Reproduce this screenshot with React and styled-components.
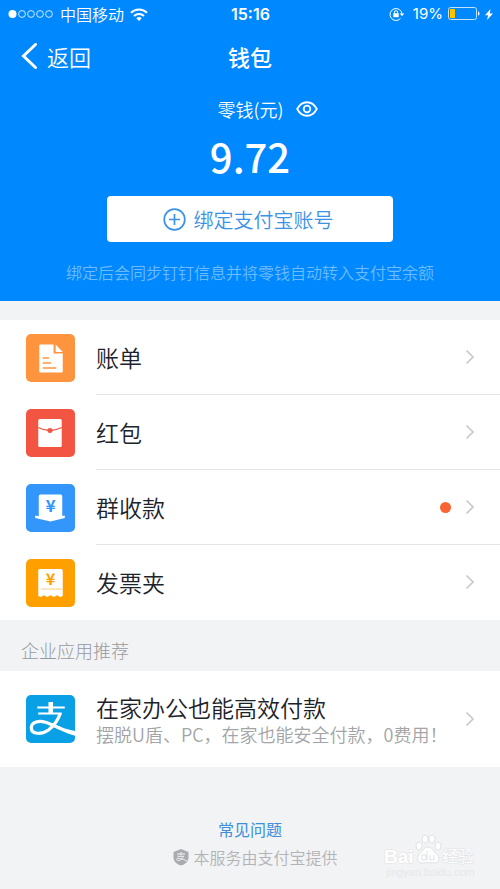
import React from "react";
import styled, { createGlobalStyle } from "styled-components";

const GlobalStyle = createGlobalStyle`
  * {
    box-sizing: border-box;
  }
  body {
    margin: 0;
    background: #f2f3f5;
    font-family: "Noto Sans CJK SC", sans-serif;
    font-weight: 350;
  }
  button {
    border: none;
    background: none;
    padding: 0;
    font: inherit;
    color: inherit;
    cursor: pointer;
  }
  a {
    color: inherit;
    text-decoration: none;
  }
  svg {
    display: block;
    flex: none;
  }
`;

const Page = styled.div`
  position: relative;
  min-height: 100vh;
  background: #f2f3f5;
`;

const Header = styled.header`
  background: #0089ff;
  color: #fff;
  padding-bottom: 17px;
`;

const StatusBar = styled.div`
  display: grid;
  grid-template-columns: 1fr auto 1fr;
  align-items: center;
  height: 28px;
  padding: 0 7px 0 8px;
  font-size: 16px;
  line-height: 24px;
`;

const StatusSide = styled.div`
  display: flex;
  align-items: center;
  justify-content: ${props => (props.$end ? "flex-end" : "flex-start")};
  gap: ${props => (props.$end ? "5px" : "6px")};
  white-space: nowrap;
`;

const Clock = styled.span`
  font-family: Inter, sans-serif;
  font-weight: 600;
`;

const Percent = styled.span`
  font-family: Inter, sans-serif;
  font-size: 15px;
  font-weight: 400;
  margin-left: 3px;
`;

const NavBar = styled.nav`
  display: grid;
  grid-template-columns: 1fr auto 1fr;
  align-items: center;
  height: 56px;
  padding: 0 20px;
  font-size: 22px;
  line-height: 32px;
`;

const BackButton = styled.button`
  display: flex;
  align-items: center;
  justify-self: start;
  gap: 9px;
`;

const Title = styled.h1`
  margin: 0;
  font-size: 22px;
  font-weight: 500;
`;

const Balance = styled.section`
  display: flex;
  flex-direction: column;
  align-items: center;
  padding-top: 12px;
`;

const BalanceLabel = styled.div`
  display: flex;
  align-items: center;
  gap: 13px;
  padding-left: 36px;
  font-size: 18px;
  line-height: 26px;
`;

const Amount = styled.strong`
  font-size: 40px;
  font-weight: 500;
  line-height: 60px;
  margin-top: 4px;
`;

const BindButton = styled.button`
  display: flex;
  align-items: center;
  justify-content: center;
  gap: 8px;
  width: calc(100% - 214px);
  height: 46px;
  margin-top: 10px;
  padding-right: 4px;
  border-radius: 4px;
  background: #fff;
  color: #3b93e8;
  font-size: 20px;
`;

const Hint = styled.p`
  margin: 18px 0 0;
  color: #6cbcff;
  font-size: 16px;
  line-height: 24px;
  white-space: nowrap;
`;

const List = styled.ul`
  margin: ${props => (props.$spaced ? "19px 0 0" : "0")};
  padding: 0;
  list-style: none;
  background: #fff;
`;

const Row = styled.a`
  display: flex;
  align-items: stretch;
  padding-left: 26px;
`;

const RowIcon = styled.span`
  display: flex;
  align-items: center;
  width: 70px;
`;

const RowBody = styled.span`
  flex: 1;
  display: flex;
  align-items: center;
  height: ${props => (props.$tall ? "96px" : "75px")};
  padding-right: 25px;
  border-bottom: 1px solid #e4e5e7;
  li:last-child & {
    border-bottom-color: transparent;
  }
`;

const RowText = styled.span`
  flex: 1;
  display: flex;
  flex-direction: column;
`;

const RowTitle = styled.span`
  color: #1c232b;
  font-size: 23px;
  line-height: 30px;
`;

const RowNote = styled.span`
  color: #a3a4a6;
  font-size: 18px;
  line-height: 24px;
  white-space: nowrap;
`;

const Dot = styled.span`
  width: 11px;
  height: 11px;
  margin-right: 14px;
  border-radius: 50%;
  background: #fa6432;
`;

const SectionTitle = styled.h2`
  margin: 0;
  padding: 17px 21px 8px;
  color: #96999e;
  font-size: 18px;
  font-weight: 300;
  line-height: 26px;
`;

const Footer = styled.footer`
  display: flex;
  flex-direction: column;
  align-items: center;
  gap: 4px;
  padding-top: 50px;
  font-size: 16px;
  line-height: 24px;
`;

const HelpLink = styled.a`
  color: #3d8fdc;
  font-weight: 400;
`;

const Provider = styled.div`
  display: flex;
  align-items: center;
  gap: 3px;
  margin-left: 10px;
  color: #b2b3b6;
`;

const Watermark = styled.div`
  position: absolute;
  right: 24px;
  bottom: 8px;
`;

const tiles = {
  bill: (
    <>
      <rect width="48" height="48" rx="5" fill="#ff943e" />
      <path d="M14 10.500h13v9h9v18a1 1 0 0 1-1 1H14a1 1 0 0 1-1-1v-26a1 1 0 0 1 1-1z" fill="#fff" />
      <path d="M29 10.500l7 7.500h-7z" fill="#fff" />
      <path d="M17 24h5M17 29h7M17 34h12" stroke="#ff943e" strokeWidth="1.600" strokeLinecap="round" />
    </>
  ),
  redPacket: (
    <>
      <rect width="48" height="48" rx="5" fill="#f25542" />
      <rect x="12" y="10" width="23" height="28" rx="1.500" fill="#fff" />
      <path d="M12 18.500q11 6 23 0" fill="none" stroke="#f25542" strokeWidth="1.300" />
      <circle cx="23.500" cy="21.500" r="2.500" fill="#f25542" />
    </>
  ),
  collect: (
    <>
      <rect width="48" height="48" rx="5" fill="#3296fa" />
      <path
        d="M12.500 12a1.500 1.500 0 0 1 1.500-1.500h20a1.500 1.500 0 0 1 1.500 1.500v20l2.500-.5v2.500L24 37.500 9 34v-2.500l3.500.7z"
        fill="#fff"
      />
      <text x="24" y="28" textAnchor="middle" fontSize="17" fontWeight="700" fill="#3296fa">¥</text>
    </>
  ),
  invoice: (
    <>
      <rect width="48" height="48" rx="5" fill="#ff9f00" />
      <path
        d="M12 11.500A1.500 1.500 0 0 1 13.500 10h21a1.500 1.500 0 0 1 1.500 1.500V37l-2.500 1-3-1.800-3.200 1.800-3.300-1.800-3.200 1.800-3.300-1.800-3 1.800-2.500-1z"
        fill="#fff"
      />
      <text x="24" y="26" textAnchor="middle" fontSize="16" fontWeight="700" fill="#ff9f00">¥</text>
      <path d="M15 30h19" stroke="#ff9f00" strokeWidth="1" strokeDasharray="1 1" />
    </>
  ),
  alipay: (
    <>
      <rect width="48" height="48" rx="5" fill="#0aa0e6" />
      <path d="M22 7h4.500v11H22zM11 11.500h27v2H11zM12 17.500h23v2H12z" fill="#fff" />
      <path
        d="M33.500 18.500C31 26 27 31 22 35C16 39.500 5 40 5.200 32.500C5.500 26.500 13 25.500 19 27.300C24 28.800 29 31.500 34 33.500"
        fill="none"
        stroke="#fff"
        strokeWidth="3.200"
      />
      <path d="M26 28.500c7 3 13 5.800 22 7.500v4.800c-9-2.500-15.500-6-23-10z" fill="#fff" />
    </>
  )
};

const Tile = ({ name }) => (
  <svg width="49" height="48" viewBox="0 0 48 48" preserveAspectRatio="none" aria-hidden="true">
    {tiles[name]}
  </svg>
);

const Signal = () => (
  <svg width="46" height="10" viewBox="0 0 46 10" aria-hidden="true">
    <circle cx="4.500" cy="5" r="4" fill="#fff" />
    {[14, 23, 32, 41].map(x => (
      <circle key={x} cx={x} cy="5" r="3.400" fill="none" stroke="#fff" strokeWidth=".8" />
    ))}
  </svg>
);

const Wifi = () => (
  <svg width="18" height="13" viewBox="0 0 18 13" fill="none" stroke="#fff" strokeWidth="2" aria-hidden="true">
    <path d="M1 4.800a11.500 11.500 0 0 1 16 0M4 8a7.300 7.300 0 0 1 10 0" />
    <path d="M9 13L6.300 10.200a4 4 0 0 1 5.400 0z" fill="#fff" stroke="none" />
  </svg>
);

const RotationLock = () => (
  <svg width="16" height="14" viewBox="0 0 16 14" fill="none" stroke="#fff" aria-hidden="true">
    <path d="M11.500 11.500A6 6 0 1 1 13 7" />
    <path d="M10.700 6.500h4.600L13 9.200z" fill="#fff" stroke="none" />
    <rect x="4.300" y="6.200" width="5.400" height="4" fill="#fff" stroke="none" />
    <path d="M5.400 6.500V5.200a1.600 1.600 0 0 1 3.200 0v1.300" />
  </svg>
);

const Battery = () => (
  <svg width="32" height="14" viewBox="0 0 32 14" aria-hidden="true">
    <rect x=".5" y=".5" width="28" height="12" rx="2" fill="none" stroke="#c4e2f5" />
    <rect x="2" y="2" width="5" height="9" fill="#ffc400" />
    <path d="M30 4.500c2 .5 2 4 0 4z" fill="#fff" />
  </svg>
);

const Bolt = () => (
  <svg width="8" height="11" viewBox="0 0 8 11" aria-hidden="true">
    <path d="M5.500 0L0 6.200h3.200L2 11l6-6.500H4.800z" fill="#fff" />
  </svg>
);

const Eye = () => (
  <svg width="22" height="16" viewBox="0 0 22 16" fill="none" stroke="#fff" strokeWidth="1.800" aria-hidden="true">
    <path d="M1.200 8C6 -1 16 -1 20.800 8C16 17 6 17 1.200 8z" strokeLinejoin="round" />
    <circle cx="11" cy="8" r="3.300" />
  </svg>
);

const PlusCircle = () => (
  <svg width="23" height="23" viewBox="0 0 23 23" fill="none" stroke="#3b93e8" strokeWidth="1.700" aria-hidden="true">
    <circle cx="11.500" cy="11.500" r="10.300" />
    <path d="M11.500 6v11M6 11.500h11" />
  </svg>
);

const Chevron = () => (
  <svg width="10" height="16" viewBox="0 0 10 16" fill="none" aria-hidden="true">
    <path d="M1.500 1.500L8 8l-6.500 6.500" stroke="#c8c9cc" strokeWidth="1.700" />
  </svg>
);

const Shield = () => (
  <svg width="18" height="17" viewBox="0 0 18 17" aria-hidden="true">
    <path d="M9 0l7.500 3v5.500c0 4-3.500 7-7.500 8-4-1-7.500-4-7.500-8V3z" fill="#aaabae" />
    <path d="M5 5h8M9 3v3M5.500 7.300h6c-1.500 4-6.500 5.500-6.800 3.200-.2-2.200 5-1 10.300 1.500" fill="none" stroke="#f2f3f5" />
  </svg>
);

const items = [
  { icon: "bill", title: "账单" },
  { icon: "redPacket", title: "红包" },
  { icon: "collect", title: "群收款", dot: true },
  { icon: "invoice", title: "发票夹" }
];

const ListItem = ({ icon, title, note, dot }) => (
  <li>
    <Row href="#">
      <RowIcon>
        <Tile name={icon} />
      </RowIcon>
      <RowBody $tall={!!note}>
        <RowText>
          <RowTitle>{title}</RowTitle>
          {note && <RowNote>{note}</RowNote>}
        </RowText>
        {dot && <Dot />}
        <Chevron />
      </RowBody>
    </Row>
  </li>
);

export default function App() {
  return (
    <Page>
      <GlobalStyle />
      <Header>
        <StatusBar>
          <StatusSide>
            <Signal />
            <span>中国移动</span>
            <Wifi />
          </StatusSide>
          <Clock>15:16</Clock>
          <StatusSide $end>
            <RotationLock />
            <Percent>19%</Percent>
            <Battery />
            <Bolt />
          </StatusSide>
        </StatusBar>
        <NavBar>
          <BackButton>
            <svg width="18" height="26" viewBox="0 0 18 26" fill="none" aria-hidden="true">
              <path d="M15.500 1.500L3.500 13l12 11.500" stroke="#fff" strokeWidth="3" strokeLinecap="round" />
            </svg>
            返回
          </BackButton>
          <Title>钱包</Title>
        </NavBar>
        <Balance>
          <BalanceLabel>
            <span>零钱(元)</span>
            <button aria-label="显示余额">
              <Eye />
            </button>
          </BalanceLabel>
          <Amount>9.72</Amount>
          <BindButton>
            <PlusCircle />
            绑定支付宝账号
          </BindButton>
          <Hint>绑定后会同步钉钉信息并将零钱自动转入支付宝余额</Hint>
        </Balance>
      </Header>

      <List $spaced>
        {items.map(item => (
          <ListItem key={item.icon} {...item} />
        ))}
      </List>

      <SectionTitle>企业应用推荐</SectionTitle>
      <List>
        <ListItem icon="alipay" title="在家办公也能高效付款" note="摆脱U盾、PC，在家也能安全付款，0费用！" />
      </List>

      <Footer>
        <HelpLink href="#">常见问题</HelpLink>
        <Provider>
          <Shield />
          本服务由支付宝提供
        </Provider>
      </Footer>

      <Watermark>
        <svg width="92" height="48" viewBox="0 0 92 48" fill="#fff" stroke="#dfe1e4" strokeWidth="1">
          <text x="0" y="30" fontFamily="Liberation Sans" fontSize="19" fontWeight="700" paintOrder="stroke">Bai</text>
          <text x="58" y="29" fontSize="16" fontWeight="400" paintOrder="stroke">经验</text>
          <text x="2" y="43" fontFamily="Liberation Sans" fontSize="11" fontWeight="400" stroke="none" fill="#e6e8ea">
            jingyan.baidu.com
          </text>
          <ellipse cx="35" cy="13" rx="3" ry="4" />
          <ellipse cx="41" cy="6" rx="3" ry="4" />
          <ellipse cx="48" cy="6" rx="3" ry="4" />
          <ellipse cx="54" cy="13" rx="3" ry="4" />
          <path d="M44 14c4 0 5 4 8 6.500 5 4 3 10-2 9.500-4-.5-8-.5-11 0-6 .8-7-6-3-9.500 3-2.500 4-6.500 8-6.500z" />
          <path d="M43 18v9M38 22h4v5h-4zM46 22v5h4v-5" fill="none" />
        </svg>
      </Watermark>
    </Page>
  );
}
